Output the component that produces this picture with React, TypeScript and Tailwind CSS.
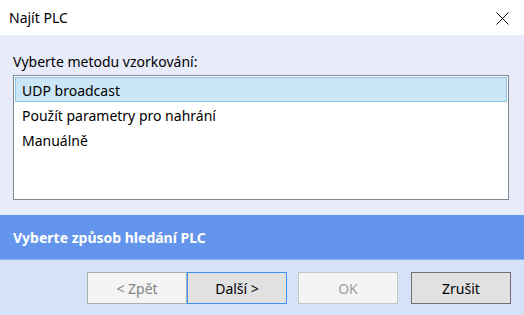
import { useState } from 'react';

const methods = ['UDP broadcast', 'Použít parametry pro nahrání', 'Manuálně'];

const font = { fontFamily: '"Noto Sans", "Open Sans", sans-serif' };

export default function App() {
  const [selected, setSelected] = useState(0);

  return (
    <div className="w-[524px] h-[315px] flex flex-col bg-white text-[14px] text-black overflow-hidden" style={font}>
      {/* title bar */}
      <div className="h-[35px] flex items-center justify-between pl-[9px] pr-[15px] bg-white">
        <span className="text-[14px] leading-none">Najít PLC</span>
        <svg width="13" height="13" viewBox="0 0 13 13" className="mt-[1px]">
          <path d="M0.5 0.5 L12.5 12.5 M12.5 0.5 L0.5 12.5" stroke="#000" strokeWidth="1" />
        </svg>
      </div>

      {/* content */}
      <div className="h-[180px] bg-[#e8ebf9] px-[13px] pt-[17px]">
        <div className="leading-[20px] mb-[3px]">Vyberte metodu vzorkování:</div>
        <div className="h-[125px] w-[496px] border border-[#828790] bg-white p-[1px]">
          {methods.map((m, i) => (
            <div
              key={m}
              onClick={() => setSelected(i)}
              className={
                'h-[25px] flex items-center pl-[6px] pt-[2px] border ' +
                (selected === i ? 'bg-[#cbe6f7] border-[#8cc4ea]' : 'border-transparent')
              }
            >
              {m}
            </div>
          ))}
        </div>
      </div>

      {/* banner */}
      <div className="h-[45px] bg-[#6495ed] flex items-center px-[13px] border-b border-[#8fb3f2]">
        <span className="text-white font-bold text-[14px]">Vyberte způsob hledání PLC</span>
      </div>

      {/* buttons */}
      <div className="flex-1 bg-[#d6e2f8] flex items-start pt-[12px] pl-[87px]">
        <button className="w-[100px] h-[32px] border border-[#adadad] bg-[#f4f4f4] text-[#838383]">&lt; Zpět</button>
        <button className="w-[100px] h-[32px] border border-[#3c96f0] bg-[#e1e1e1]">Další &gt;</button>
        <button className="ml-[11px] w-[100px] h-[32px] border border-[#c4c4c4] bg-[#f4f4f4] text-[#a0a0a0]">OK</button>
        <button className="ml-[13px] w-[100px] h-[32px] border border-[#707070] bg-[#e1e1e1]">Zrušit</button>
      </div>
    </div>
  );
}
